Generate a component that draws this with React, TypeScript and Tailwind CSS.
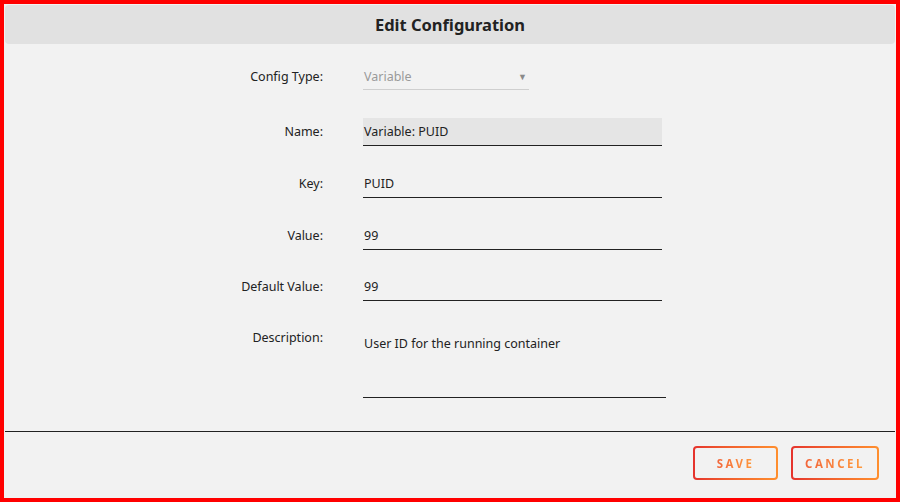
const fields = [
    { label: "Key:", value: "PUID", top: "mt-[24px]" },
    { label: "Value:", value: "99", top: "mt-[24px]" },
    { label: "Default Value:", value: "99", top: "mt-[23px]" },
]

function GradientButton({ text, width }: { text: string; width: string }) {
    return (
        <div className={`rounded-[4px] bg-gradient-to-r from-[#e5322d] to-[#ff8f2e] p-[2px] ${width}`}>
            <div className="flex h-[30px] items-center justify-center rounded-[2px] bg-[#f2f2f2] pt-px">
                <span className="bg-gradient-to-r from-[#f2653a] to-[#ff9a3c] bg-clip-text text-[11.5px] font-bold tracking-[2.5px] text-transparent">
                    {text}
                </span>
            </div>
        </div>
    )
}

function App() {
    return (
        <div
            className="flex h-[502px] w-[900px] flex-col border-4 border-[#ff0000] bg-[#f2f2f2] text-[12.5px] text-[#222]"
            style={{ fontFamily: '"Noto Sans", "Open Sans", sans-serif' }}
        >
            <div className="mx-px mt-px flex h-[39px] items-center justify-center rounded-[4px] bg-[#e1e1e1] pt-[2px]">
                <h1 className="text-[16.5px] font-bold text-[#222]">Edit Configuration</h1>
            </div>

            <div className="flex-1">
                {/* config type select */}
                <div className="mt-[18px] flex items-center">
                    <div className="w-[319px] pt-[3px] text-right">Config Type:</div>
                    <div className="ml-[40px] flex h-[28px] w-[166px] items-center justify-between border-b border-[#cfcfcf] pl-px pr-[2px] pt-[3px] text-[#9a9a9a]">
                        <span>Variable</span>
                        <span className="text-[9px] text-[#8a8a8a]">▼</span>
                    </div>
                </div>

                <div className="mt-[28px] flex items-center">
                    <div className="w-[319px] pt-px text-right">Name:</div>
                    <div className="ml-[40px] flex h-[28px] w-[299px] items-center border-b border-[#222] bg-[#e5e5e5] pl-px pt-px">
                        Variable: PUID
                    </div>
                </div>

                {fields.map((f) => (
                    <div className={`flex items-center ${f.top}`} key={f.label}>
                        <div className="w-[319px] pt-px text-right">{f.label}</div>
                        <div className="ml-[40px] flex h-[28px] w-[299px] items-center border-b border-[#222] pl-px pt-px">
                            {f.value}
                        </div>
                    </div>
                ))}

                <div className="mt-[25px] flex items-start">
                    <div className="w-[319px] pt-[3px] text-right">Description:</div>
                    <div className="ml-[40px] h-[72px] w-[303px] border-b border-[#222] pl-px pt-[9px]">
                        User ID for the running container
                    </div>
                </div>
            </div>

            <div className="mx-px h-px bg-[#222]" />
            <div className="flex h-[66px] items-start justify-end gap-[13px] pr-[17px] pt-[14px]">
                <GradientButton text="SAVE" width="w-[85px]" />
                <GradientButton text="CANCEL" width="w-[88px]" />
            </div>
        </div>
    )
}

export default App
